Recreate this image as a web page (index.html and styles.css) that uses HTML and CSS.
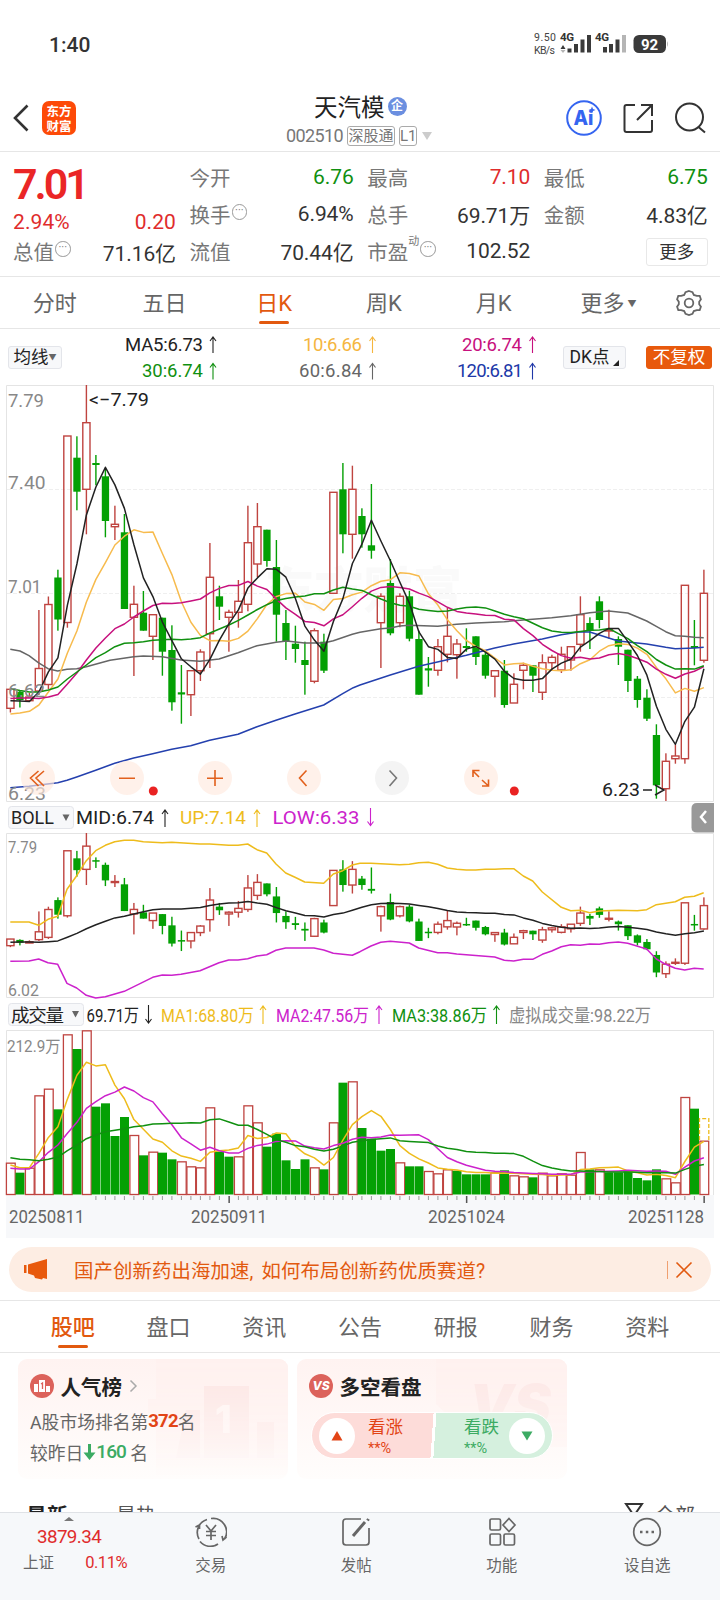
FILE: index.html
```html
<!DOCTYPE html>
<html lang="zh-CN">
<head>
    <meta charset="UTF-8">
    <meta name="viewport" content="width=device-width, initial-scale=1.0">
    <title>天汽模 002510</title>
    <link rel="stylesheet" href="styles.css">
</head>
<body>
<div class="phone">
    <div class="status">
        <span class="clock">1:40</span>
        <svg class="signals" width="140" height="28" viewBox="532 30 140 28">
            <g class="tiny"><text x="534" y="41" textLength="22">9.50</text><text x="534" y="54" textLength="21">KB/s</text></g>
            <g class="net"><text x="560" y="41" textLength="14">4G</text><text x="595" y="41" textLength="14">4G</text></g>
            <g fill="#3a3a3a">
                <path d="M560.500 49l2.500-4 2.500 4zM567.500 48.500h4v4h-4zM574 44h4v8.500h-4zM580.500 39.500h4v13h-4zM587 35h4v17.500h-4zM603 47h4v5.500h-4zM609 44h4v8.500h-4zM615.500 39.500h4v13h-4z"/>
                <rect x="633.500" y="35" width="32.500" height="18" rx="5.500"/>
            </g>
            <path fill="#b5b5b5" d="M560.500 50l2.500 3 2.500-3zM622 35h4v17.500h-4zM667 41q2 3 0 6z"/>
            <text class="batt" x="641" y="49.500" textLength="17">92</text>
        </svg>
    </div>

    <header class="top">
        <svg class="back" width="18" height="28" viewBox="0 0 18 28"><path d="M15.500 1.500L3 14l12.500 12.500"/></svg>
        <div class="logo">东方<br>财富</div>
        <div class="stock">
            <h1>天汽模<i class="qi">企</i></h1>
            <p><span class="code">002510</span><b>深股通</b><b class="l1">L1</b><i class="caret"></i></p>
        </div>
        <svg class="tools" width="144" height="38" viewBox="564 99 144 38">
            <circle cx="584" cy="118" r="16.800" fill="none" stroke="#3565f0" stroke-width="2"/>
            <text class="ai" x="573.500" y="125" textLength="20" lengthAdjust="spacingAndGlyphs">Ai</text>
            <path d="M592 106.500l1 2.500 2.500 1-2.500 1-1 2.500-1-2.500-2.500-1 2.500-1z" fill="#3565f0"/>
            <g class="ico"><path d="M635 105h-8.500q-2 0-2 2v23q0 2 2 2h23.500q2 0 2-2v-10M641 105h11v11M652 105l-15 15"/>
            <circle cx="689.500" cy="117" r="13.500"/><path d="M698.500 127l6.500 5.500"/></g>
        </svg>
    </header>

    <section class="quote">
        <div class="col">
            <strong class="price">7.01</strong>
            <p class="row up chg"><span>2.94%</span><span>0.20</span></p>
            <p class="row"><label>总值<i class="dots">···</i></label><span>71.16亿</span></p>
        </div>
        <div class="col">
            <p class="row"><label>今开</label><span class="down">6.76</span></p>
            <p class="row"><label>换手<i class="dots">···</i></label><span>6.94%</span></p>
            <p class="row"><label>流值</label><span>70.44亿</span></p>
        </div>
        <div class="col">
            <p class="row"><label>最高</label><span class="up">7.10</span></p>
            <p class="row"><label>总手</label><span>69.71万</span></p>
            <p class="row"><label>市盈<sup>动</sup><i class="dots">···</i></label><span>102.52</span></p>
        </div>
        <div class="col">
            <p class="row"><label>最低</label><span class="down">6.75</span></p>
            <p class="row"><label>金额</label><span>4.83亿</span></p>
            <p class="row end"><button class="more">更多</button></p>
        </div>
    </section>

    <nav class="periods">
        <a>分时</a><a>五日</a><a class="on">日K</a><a>周K</a><a>月K</a><a class="drop">更多<small>▼</small></a>
        <svg width="28" height="28" viewBox="0 0 28 28"><path d="M14 2l3.500 1.200 1.300 2.700 3 .9 2.900.1 1.200 3.400-1.700 2.400v2.600l1.700 2.400-1.200 3.400-2.900.1-3 .9-1.300 2.700L14 26l-3.500-1.200-1.300-2.700-3-.9-2.900-.1-1.200-3.400 1.700-2.400v-2.600L2.100 10.300l1.200-3.400 2.900-.1 3-.9 1.300-2.700z"/><circle cx="14" cy="14" r="4.300"/></svg>
    </nav>

    <div class="ma-bar">
        <button class="pick">均线<small>▼</small></button>
        <svg class="legend ma" width="430" height="56" viewBox="115 329 430 56">
            <text x="125" y="350.500" textLength="78" fill="#222">MA5:6.73</text>
            <text x="303" y="350.500" textLength="59" fill="#f5b63f">10:6.66</text>
            <text x="462" y="350.500" textLength="60" fill="#c7117e">20:6.74</text>
            <text x="142" y="377" textLength="61" fill="#109010">30:6.74</text>
            <text x="299" y="377" textLength="63" fill="#666">60:6.84</text>
            <text x="457" y="377" textLength="66" fill="#2038a8">120:6.81</text>
            <g class="arrows">
                <path stroke="#222" d="M213 353v-16m-3 4l3-4 3 4"/>
                <path stroke="#f5b63f" d="M372.500 353v-16m-3 4l3-4 3 4"/>
                <path stroke="#c7117e" d="M532.500 353v-16m-3 4l3-4 3 4"/>
                <path stroke="#109010" d="M213 379.500v-16m-3 4l3-4 3 4"/>
                <path stroke="#666" d="M372.500 379.500v-16m-3 4l3-4 3 4"/>
                <path stroke="#2038a8" d="M532.500 379.500v-16m-3 4l3-4 3 4"/>
            </g>
        </svg>
        <button class="pick dk">DK点<i></i></button>
        <button class="pick fq">不复权</button>
    </div>

    <svg id="kline" width="720" height="418" viewBox="0 385 720 418"></svg>

    <svg class="legend boll" width="720" height="30" viewBox="0 803 720 30">
        <rect class="sel" x="8.500" y="806.500" width="65" height="22" rx="3"/>
        <text x="11" y="824" textLength="43" lengthAdjust="spacingAndGlyphs" fill="#222">BOLL</text><path d="M62.500 814.500h7l-3.500 6.500z" fill="#666"/>
        <text x="76" y="824" textLength="78" lengthAdjust="spacingAndGlyphs" fill="#222">MID:6.74</text>
        <text x="180" y="824" textLength="66" lengthAdjust="spacingAndGlyphs" fill="#eebc1c">UP:7.14</text>
        <text x="272.500" y="824" textLength="87" lengthAdjust="spacingAndGlyphs" fill="#cc22cc">LOW:6.33</text>
        <g class="arrows">
            <path stroke="#222" d="M165 827v-17m-3 4l3-4 3 4"/>
            <path stroke="#eebc1c" d="M257 827v-17m-3 4l3-4 3 4"/>
            <path stroke="#cc22cc" d="M370.500 808v17.500m-3-4l3 4 3-4"/>
        </g>
        <path d="M714 803h-17q-5.500 0-5.500 5.500v19q0 5 5.500 5h17z" fill="#999"/>
        <path d="M706 811l-5 6 5 6" fill="none" stroke="#fff" stroke-width="2.500"/>
    </svg>
    <svg id="boll" width="720" height="166" viewBox="0 833 720 166"></svg>

    <svg class="legend vol" width="720" height="31" viewBox="0 999 720 31">
        <rect class="sel" x="8.500" y="1003.500" width="75" height="22" rx="3"/>
        <text x="11" y="1021.500" textLength="53" fill="#222">成交量</text><path d="M72 1011h7l-3.500 6.500z" fill="#666"/>
        <text x="86.500" y="1021.500" textLength="52.500" lengthAdjust="spacingAndGlyphs" fill="#222">69.71万</text>
        <text x="161" y="1021.500" textLength="93" lengthAdjust="spacingAndGlyphs" fill="#eebc1c">MA1:68.80万</text>
        <text x="276" y="1021.500" textLength="93" lengthAdjust="spacingAndGlyphs" fill="#cc22cc">MA2:47.56万</text>
        <text x="392" y="1021.500" textLength="95" lengthAdjust="spacingAndGlyphs" fill="#109010">MA3:38.86万</text>
        <text x="509" y="1021.500" textLength="142" lengthAdjust="spacingAndGlyphs" fill="#888">虚拟成交量:98.22万</text>
        <g class="arrows">
            <path stroke="#222" d="M148.500 1005v18m-3-4l3 4 3-4"/>
            <path stroke="#eebc1c" d="M263 1024v-18m-3 4l3-4 3 4"/>
            <path stroke="#cc22cc" d="M379 1024v-18m-3 4l3-4 3 4"/>
            <path stroke="#109010" d="M496.500 1024v-18m-3 4l3-4 3 4"/>
        </g>
    </svg>
    <svg id="volume" width="720" height="208" viewBox="0 1030 720 208"></svg>

    <div class="banner">
        <svg width="24" height="22" viewBox="0 0 24 22"><path d="M0 6h2.500v8H0zM4 5.500L23 0v20l-4-1-1 1.500-7-1.500-1-2.500L4 14.500z"/></svg>
        <span>国产创新药出海加速, 如何布局创新药优质赛道?</span>
        <i></i>
        <svg class="x" width="18" height="18" viewBox="0 0 18 18"><path d="M1.500 1.500l15 15M16.500 1.500l-15 15"/></svg>
    </div>

    <nav class="sections">
        <a class="on">股吧</a><a>盘口</a><a>资讯</a><a>公告</a><a>研报</a><a>财务</a><a>资料</a>
    </nav>

    <div class="cards">
        <div class="card">
            <svg class="ghost" width="160" height="120" viewBox="0 0 160 120"><path d="M28 0h132v120H28V54H20V40h8z" fill="#fff1ef"/><path d="M76 27h45v72H76zM58 51h14v48H48zM129 63h17v36h-17z" fill="#fce5e3"/><text x="87" y="74">1</text></svg>
            <h3><svg width="24" height="24" viewBox="0 0 24 24"><circle cx="12" cy="12" r="12" fill="#dc625b"/><path fill="#fff" d="M4 10h4v8H4zM9 6h6v12H9zM16 12h4v6h-4z"/><path d="M11 10l1.500-1v6" fill="none" stroke="#dc625b" stroke-width="1.300"/></svg>人气榜<svg width="9" height="14" viewBox="0 0 9 14"><path d="M1.500 1.500L7 7l-5.500 5.500" fill="none" stroke="#aaa" stroke-width="1.500"/></svg></h3>
            <p>A股市场排名第<b>372</b>名</p>
            <p class="cmp">较昨日<svg width="13" height="18" viewBox="0 0 13 18"><path d="M5 1h3v8.500h4.500l-6 7.500-6-7.500H5z"/></svg><em>160</em> 名</p>
        </div>
        <div class="card">
            <svg class="ghost" width="160" height="120" viewBox="0 0 160 120"><path d="M29 0h131v88H66L45 60 29 45z" fill="#fff1ef"/><text class="vs" x="62" y="66">VS</text></svg>
            <h3><i class="vs-ico">VS</i>多空看盘</h3>
            <div class="vote">
                <div class="bull"><i><svg width="12" height="10" viewBox="0 0 12 10"><path d="M6 0l5.500 9.500H.5z" fill="#e24416"/></svg></i><span>看涨<small>**%</small></span></div>
                <div class="bear"><span>看跌<small>**%</small></span><i><svg width="12" height="10" viewBox="0 0 12 10"><path d="M6 9.500L.5.500h11z" fill="#3cab63"/></svg></i></div>
            </div>
        </div>
    </div>

    <div class="feed">
        <b>最新</b><span>最热</span>
        <svg width="20" height="20" viewBox="0 0 20 20"><path d="M2 2h16l-5.500 8v8h-5v-8z"/></svg><span>全部</span>
    </div>

    <footer>
        <div class="index"><i></i><strong>3879.34</strong><p><span>上证</span><em>0.11%</em></p></div>
        <a><svg width="32" height="30" viewBox="0 0 32 30"><path d="M4 22A13.500 13.500 0 0 1 12 2.500M16 1.500a13.500 13.500 0 0 1 13.500 20.500M5 24.500A13.500 13.500 0 0 0 23 27M.5 10l4-2v4M31.500 20l-3.500 3-1-4M11 8l5 6 5-6M16 14v9M11 14.500h10M11 18.500h10"/></svg>交易</a>
        <a><svg width="32" height="30" viewBox="0 0 32 30"><path d="M21 2H6Q3 2 3 5v20q0 3 3 3h20q3 0 3-3V11"/><path d="M13 19l12-14" stroke-width="3"/><path d="M27.500 3.500l1-1.500" stroke-width="3"/></svg>发帖</a>
        <a><svg width="32" height="30" viewBox="0 0 32 30"><rect x="4" y="2" width="10.500" height="11" rx="1.500"/><path d="M23 1.500l6 6.500-6 6.500L17 8z"/><rect x="4" y="17" width="10.500" height="11" rx="1.500"/><rect x="18" y="17" width="10.500" height="11" rx="1.500"/></svg>功能</a>
        <a><svg width="32" height="30" viewBox="0 0 32 30"><circle cx="16" cy="15" r="13.300"/><path d="M9 15h2.500M14.800 15h2.500M20.500 15H23" stroke-width="2.500"/></svg>设自选</a>
    </footer>
</div>
<script src="chart.js"></script>
</body>
</html>
```
FILE: chart.js
```js
// color, high, low, body top, body bottom
const candles = `r 689 712.5 689.3 708.3
g 690 707.5 691.7 700
r 693 701 697 700.7
r 610 695 668.5 691
r 596.5 689 604.5 684.5
g 569.7 630.7 577.5 619.5
r 436 627.7 436 622.5
g 436.3 510.3 457.7 491.7
r 385 534.3 422.7 489.3
g 455 485.3 463 465
g 470 537.3 476.3 521
r 505.7 540 524.3 526.7
g 514 609 532.3 609
r 585.7 676 604.3 617.3
g 591 630.7 612.7 630.7
r 614.7 660 614.7 636.3
g 617.7 675.7 617.7 651.7
g 625.3 710.7 650 702.3
g 665 723.7 692.3 694.5
r 670.7 716 670.7 694.7
r 649.3 681 652 670.7
r 543 668 577.3 633.7
g 585.7 620 596.3 606.7
r 609.7 651.7 612.3 617.3
r 580 627.7 601.3 612.3
r 505.7 611.3 542.7 604.3
r 503 577 526.7 564
g 529.7 566.7 529.7 561
g 540 641.7 567 614.7
g 610 660 623 641
g 625.7 662.7 643.7 649
g 641.7 694.7 660 665
r 628.3 683.3 630.7 681.3
g 633.7 673 641.7 670.7
r 492.3 593.3 492.3 593.3
g 463 553.3 489.3 534.3
r 465.7 558.7 489.3 534.3
g 508.3 547.7 516 534.3
g 484 558.7 545.3 550.7
r 593.3 668 596.3 622.7
g 559 635.3 583 633.3
r 593.3 627.3 596.3 622.7
g 590.7 641.3 596.3 638.7
g 630.7 694.7 639 694.7
g 657 686.7 668.3 670.5
r 639 675.7 646.7 670.3
r 608 662.3 636.3 654.3
r 639 678.7 644 654.7
g 628.3 651.7 646 648
g 636.3 665 636.3 657
g 651.7 678.7 654.7 675.7
r 670.7 697.3 670.7 676.3
g 660 707.7 670.7 705
r 673.3 703 684.3 703
r 662.7 689.3 665.3 670.3
g 665.3 692 665.3 675.7
r 654.3 700 662.7 692.3
r 654.7 670.7 657.3 662.7
r 646.7 673 654.3 670
r 646.7 670.7 646.7 660
r 596.3 651.7 614.7 644.3
g 617.3 649 623 630.7
g 596.3 628.3 601.3 620
r 609.7 638.7 629.7 631
g 636.3 665 639 646.7
g 649.7 692 649.7 681
g 676 707.7 678.7 700
g 689.3 721 697.7 718.7
g 724.3 798.7 735 785.3
r 753.3 801 761.3 788.7
r 744.7 763.7 756 758.7
r 585.3 763.7 585.3 758.7
g 620 665.3 646 648
r 569.7 662.7 593.3 660.3`.split("\n").map(l => {
    const [c, ...v] = l.split(" ");
    return [c, ...v.map(Number)];
});

const vols = "r488 g518 r503 r286 r266 g328 r103 g147 r91 g320 g310 g408 g351 r405 g466 r455 g458 g478 r484 r499 r502 r322 g455 g470 r469 r316 r367 g440 g401 g481 g507 g478 r502 g508 r367 g248 r244 g384 g416 g452 g447 r487 g499 g499 r513 r520 r508 g512 g523 g523 g523 r517 g511 r526 r529 g532 r518 r526 r520 r524 r456 g508 r508 g517 g517 g514 g534 g541 g508 r535 r547 r291 g326 r422"
    .split(" ").map(v => [v[0], 1000 + v.slice(1) / 3]);

const RED = "#bf4440", GREEN = "#04a004";
const cx = i => 10.4 + 9.5 * i;
const rect = (x, y, w, h, a) => `<rect x="${x}" y="${y}" width="${w}" height="${h}" ${a}/>`;
const line = (pts, color) => `<polyline points="${pts}" fill="none" stroke="${color}" stroke-width="1.5" stroke-linejoin="round"/>`;
const text = (x, y, s, w, a = "") => `<text x="${x}" y="${y}" textLength="${w}" lengthAdjust="spacingAndGlyphs" ${a}>${s}</text>`;

// moving average, the first values come from days left of the window
function average(values, n, seed) {
    return values.map((v, i) => {
        const y = i < seed.length ? seed[i] : values.slice(i - n + 1, i + 1).reduce((a, b) => a + b) / n;
        return cx(i).toFixed(1) + "," + y.toFixed(1);
    }).join(" ");
}

// points kept in thirds of a pixel, left half and right half
function thirds(left, right, oy) {
    const conv = (s, ox) => s.split(" ").map(p => {
        const [x, y] = p.split(",");
        return (ox + x / 3).toFixed(1) + "," + (oy + y / 3).toFixed(1);
    }).join(" ");
    return conv(left, 0) + " " + conv(right, 360);
}

function drawCandles(fy) {
    return candles.map(([c, hi, lo, top, bot], i) => {
        const x = cx(i), [h, l, t, b] = [hi, lo, top, bot].map(fy);
        if (c === "g") {
            return rect(x - .7, h, 1.4, l - h, `fill="${GREEN}"`) + rect(x - 3.6, t, 7.3, Math.max(b - t, 1.5), `fill="${GREEN}"`);
        }
        return rect(x - .7, h, 1.4, Math.max(t - h, 0), `fill="${RED}"`) + rect(x - .7, b, 1.4, Math.max(l - b, 0), `fill="${RED}"`)
            + rect(x - 3.6, t, 7.2, Math.max(b - t, 1), `fill="none" stroke="${RED}" stroke-width="1.4"`);
    }).join("");
}

const closes = candles.map(c => c[0] === "r" ? c[3] : c[4]);
const seed20 = [698.5, 698, 698, 698.5, 697, 694.5, 684, 673, 660, 648, 638, 628.7, 624, 617, 611, 605.5, 603.3, 603.5, 602.7];

// ---- day K ----
let k = text(265, 608, "东方财富", 197, 'class="mark"');
k += '<path d="M6.500 385.500H713.500V801.500H6.500z" fill="none" stroke="#e4e4e4"/>';
k += '<path d="M7 489.500H713M7 593.500H713M7 697.500H713" stroke="#efefef" stroke-dasharray="4 2"/>';
k += drawCandles(y => y);
k += line(thirds("31,148 60,153 87,167 115,188 144,206 173,213 201,208 230,206 259,200 330,181 401,170 430,168 487,170 543,180 600,184 657,177 714,158 771,137 828,127 860,123 914,129 971,129 1000,122 1057,103",
    "0,97 62,86 91,84 119,78 148,76 233,79 290,73 347,69 433,65 490,60 575,53 632,47 689,38 746,33 803,39 832,51 860,63 889,79 917,95 946,107 974,109 1003,112 1031,113", 600), "#666");
k += line(thirds("31,563 87,559 173,548 201,541 230,531 287,511 344,490 401,474 458,461 515,448 572,437 629,421 714,403 771,380 828,361 885,342 971,315 1028,281 1060,263",
    "0,255 91,225 176,199 262,179 319,166 404,144 461,132 547,117 604,104 661,95 689,96 718,105 746,114 775,123 860,132 917,142 946,146 1003,144 1031,142", 600), "#2440ae");
k += line(average(closes, 10, [714, 713, 711.3, 705, 692, 679, 653, 631, 602]), "#f7bb4d");
k += line(average(closes, 20, seed20), "#c7117e");
k += line(average(closes, 30, [688.7, 690.5, 692, 692, 690, 687, 679, 672, 665, 657.7, 652.7, 646.7, 643.3, 642.7, 641.7, 640.3, 639.7, 639.3, 639.7, 639, 637.7, 633, 629, 625, 620.3, 615, 609.5, 604.7, 600.5]), "#109010");
k += line(average(closes, 5, [700.7, 701, 701.5, 692]), "#222");
k += text(8, 406.5, "7.79", 36) + text(8, 489, "7.40", 37.5) + text(8, 593, "7.01", 33.5) + text(8, 697, "6.62", 37) + text(8, 799.500, "6.23", 38);
k += text(89, 405.5, "&lt;−7.79", 60, 'class="dark"') + text(602, 796, "6.23", 38, 'class="dark"') + '<path d="M643 790h9M655 785l9 5-9 5" fill="none" stroke="#222" stroke-width="1.500"/>';
[38, 127, 215, 304, 392, 481].forEach((x, i) => {
    k += `<circle cx="${x}" cy="778" r="17" fill="${i === 4 ? "#eee" : "#ffe9de"}" fill-opacity=".65"/>`;
});
k += `<g fill="none" stroke="#e2601c" stroke-width="1.600"><path d="M38.500 771l-8 7 8 8M44 771l-8 7 8 8M119 778.300h16M207 778.300h16M215 770v16M306.500 770.500l-7 7.500 7 8"/>
    <path d="M479 777l-6-6M473 777v-6.500h6.500M482 780l6.500 6M488.500 779.500v6.500H482"/><path stroke="#777" d="M389.500 770.500l7 7.500-7 8"/></g>`;
k += '<circle cx="153.300" cy="791" r="4.500" fill="#e92222"/><circle cx="514.300" cy="791" r="4.500" fill="#e92222"/>';
document.getElementById("kline").innerHTML = k;

// ---- boll ----
const by = y => 833 + (y - 385) * .3485;
let b = '<path d="M6.500 833.500H713.500V997.500H6.500z" fill="none" stroke="#e4e4e4"/>' + drawCandles(by);
b += line(thirds("31,366 87,366 116,376 144,358 173,349 201,268 230,227 259,182 287,152 316,136 344,125 373,121 401,121 430,125 487,128 515,127 600,132 629,132 686,136 714,136 743,132 771,149 800,159 828,192 857,219 885,232 914,246 971,250 1000,222 1028,212 1057,195",
    "0,190 33,190 119,194 148,193 176,188 205,187 233,193 262,204 290,208 319,210 347,210 376,208 404,208 433,206 461,206 490,228 518,243 547,276 604,322 632,332 661,331 689,338 718,333 775,331 832,332 860,329 889,314 946,305 974,292 1003,289 1031,278", 800), "#eebc1c");
b += line(thirds("31,484 87,483 116,477 144,488 173,493 201,550 230,564 259,586 287,594 316,590 373,574 458,532 487,525 515,526 543,523 600,512 657,488 686,480 714,480 743,476 771,468 800,464 828,451 857,444 942,444 971,450 1000,460 1057,466",
    "0,455 33,438 62,427 91,424 148,429 176,444 233,458 262,458 290,462 404,471 433,481 461,483 490,478 518,478 547,463 575,453 604,440 632,434 661,436 689,432 718,433 746,428 775,426 803,430 860,447 889,477 917,493 946,505 974,510 1003,505 1031,507", 800), "#cc22cc");
b += line(average(closes.map(by), 20, seed20.map(by)), "#222");
b += text(8, 852.500, "7.79", 29, 'class="sm"') + text(8, 996, "6.02", 31, 'class="sm"');
document.getElementById("boll").innerHTML = b;

// ---- volume ----
let v = rect(6, 1195, 708, 43, 'fill="#f7f8fa"') + '<path d="M6.500 1195V1030.500H713.500V1195" fill="none" stroke="#e4e4e4"/>';
v += text(7, 1052, "212.9万", 53.5, 'class="sm"');
vols.forEach(([c, y], i) => {
    const x = cx(i);
    v += c === "g" ? rect(x - 4.4, y, 9, 1194.5 - y, `fill="${GREEN}"`)
        : rect(x - 4, y + .5, 8.8, 1194 - y, `fill="#fff" stroke="${RED}" stroke-width="1.3"`);
});
v += '<path d="M699.500 1140v-21.300h9.300V1140" fill="none" stroke="#eebc1c" stroke-width="1.300" stroke-dasharray="4 2"/>';
const vy = vols.map(d => d[1]), off = a => a.map(n => 1000 + n / 3);
v += line(average(vy, 5, off([495, 503, 503, 460])), "#eebc1c");
v += line(average(vy, 10, off([505, 507, 507, 485, 457, 435, 400, 367, 325])), "#cc22cc");
v += line(average(vy, 20, off([473, 478, 479, 482, 478, 471, 452, 435, 416, 405, 395, 391, 386, 380, 377, 372, 371, 370, 370])), "#109010");
for (let i = 9; i < 74; i++) {
    const big = i === 23 || i === 48 || i === 73;
    v += rect(cx(i) - .5, 1196, big ? 1.5 : 1, big ? 7 : 4, `fill="${big ? "#555" : "#999"}"`);
}
v += text(9, 1222.500, "20250811", 75.5, 'class="date"') + text(191, 1222.500, "20250911", 76, 'class="date"')
    + text(428, 1222.500, "20251024", 77, 'class="date"') + text(628, 1222.500, "20251128", 76, 'class="date"');
document.getElementById("volume").innerHTML = v;
```
FILE: styles.css
```css
*,
*:before,
*:after {
    box-sizing: border-box;
}
body,
h1,
h3,
p {
    margin: 0;
}
body {
    background: #fff;
    color: #333;
    font-family: Roboto, "Noto Sans CJK SC", sans-serif;
    font-size: 20px;
}
i,
em {
    font-style: normal;
}
svg {
    display: block;
    flex: none;
}
button {
    font: inherit;
    padding: 0;
    cursor: pointer;
}
.phone {
    width: 720px;
    height: 1600px;
    overflow: hidden;
    display: flex;
    flex-direction: column;
}

/* status */
.status {
    height: 88px;
    padding: 0 48px 0 49px;
    display: flex;
    align-items: center;
    justify-content: space-between;
}
.clock {
    font-size: 21px;
    font-weight: 500;
    padding-top: 2px;
}
.tiny {
    font-size: 10.5px;
    fill: #444;
}
.net {
    font-size: 11.5px;
    font-weight: 700;
    fill: #333;
}
.batt {
    font-size: 15px;
    font-weight: 700;
    fill: #fff;
}

/* header */
.top {
    height: 64px;
    border-bottom: 1px solid #e6e6e6;
    padding: 0 12px;
    display: flex;
    align-items: center;
    flex: none;
}
.back,
.tools {
    margin-top: -3px;
}
.back path {
    fill: none;
    stroke: #333;
    stroke-width: 2.6;
}
.logo {
    width: 34px;
    height: 34px;
    margin: -3px 0 0 12px;
    border-radius: 7px;
    background: #fd4a08;
    color: #fff;
    font: 700 12.500px/14.500px "Noto Sans CJK SC", sans-serif;
    text-align: center;
    padding-top: 3px;
}
.stock {
    flex: 1;
    height: 64px;
    padding: 6px 0 0 210px;
}
.stock h1 {
    display: flex;
    align-items: center;
    gap: 3px;
    font-size: 23.5px;
    font-weight: 400;
    line-height: 28px;
    color: #222;
    padding-left: 28px;
}
.qi {
    width: 19px;
    height: 19px;
    border-radius: 50%;
    background: #6b8fe0;
    color: #fff;
    font-size: 12px;
    font-weight: 700;
    line-height: 18px;
    text-align: center;
    margin-top: -2px;
}
.stock p {
    display: flex;
    align-items: center;
    gap: 4px;
    color: #777;
    font-size: 18px;
    height: 28px;
}
.code {
    letter-spacing: -.6px;
    width: 57px;
}
.stock b {
    font-weight: 400;
    font-size: 15px;
    line-height: 18px;
    height: 20px;
    width: 48px;
    text-align: center;
    border: 1px solid #aaa;
    border-radius: 3px;
}
.stock .l1 {
    width: 18px;
}
.caret {
    border: 5.5px solid transparent;
    border-top: 8px solid #ccc;
    border-bottom: 0;
    margin-left: 1px;
}
.ai {
    font: 800 20px Inter, sans-serif;
    fill: #3565f0;
}
.ico {
    fill: none;
    stroke: #333;
    stroke-width: 2;
}

/* quote */
.quote {
    height: 125px;
    border-bottom: 1px solid #e6e6e6;
    padding: 7px 12px 0 13px;
    display: grid;
    grid-template-columns: 163px 164px 163px 164px;
    column-gap: 13.600px;
    flex: none;
}
.row {
    height: 37px;
    display: flex;
    align-items: center;
    justify-content: space-between;
    font-size: 20.5px;
    white-space: nowrap;
}
.row span {
    font-size: 21px;
    letter-spacing: -.1px;
}
.row label {
    color: #777;
    display: flex;
    align-items: center;
}
.col .row label,
.col:not(:first-child) .row span {
    margin-top: -1px;
}
.row.end {
    justify-content: flex-end;
}
.up,
.row .up {
    color: #e02c2c;
}
.row .down {
    color: #109010;
}
.price {
    display: block;
    height: 46px;
    font-size: 43px;
    font-weight: 600;
    line-height: 50px;
    letter-spacing: -3px;
    color: #ea2626;
}
.chg {
    height: 34px;
    margin-bottom: -6px;
}
.chg span {
    letter-spacing: .1px;
}
.dots {
    width: 15.5px;
    height: 15.5px;
    border: 1px solid #999;
    border-radius: 50%;
    font-size: 11px;
    line-height: 12px;
    text-align: center;
    margin: -4px 0 0 1px;
}
.row sup {
    font-size: 11px;
    line-height: 12px;
    margin-top: -18px;
}
.more {
    width: 62px;
    height: 28px;
    border: 1px solid #e8e8e8;
    border-radius: 3px;
    background: #fff;
    font-size: 17.5px;
    line-height: 24px;
    color: #333;
}

/* period tabs */
.periods {
    height: 52px;
    border-bottom: 1px solid #e6e6e6;
    display: flex;
    align-items: center;
    flex: none;
}
.periods a {
    width: 109.700px;
    height: 51px;
    line-height: 54px;
    font-size: 22px;
    color: #666;
    text-align: center;
}
.periods .drop {
    width: 120px;
}
.periods .drop small {
    font-size: 9px;
    vertical-align: 4px;
    margin-left: 3px;
}
.periods svg {
    margin-left: 7px;
}
.periods path,
.periods circle {
    fill: none;
    stroke: #666;
    stroke-width: 1.8;
}
.periods .on,
.sections .on {
    color: #e2590f;
    position: relative;
}
.periods .on:after,
.sections .on:after {
    content: "";
    position: absolute;
    left: 50%;
    bottom: 4px;
    width: 30px;
    height: 3px;
    margin-left: -15px;
    border-radius: 2px;
    background: #e2590f;
}

/* MA bar */
.ma-bar {
    height: 56px;
    padding-left: 8px;
    display: flex;
    align-items: center;
    flex: none;
}
.pick {
    width: 54px;
    height: 23px;
    background: #f7f8fa;
    border: 1px solid #e3e5ea;
    border-radius: 3px;
    font-size: 17.5px;
    line-height: 20px;
    color: #222;
    white-space: nowrap;
}
.pick small {
    font-size: 8px;
    vertical-align: 3px;
    color: #666;
}
.ma {
    margin-left: 53px;
}
.dk {
    width: 63px;
    margin-left: 18px;
}
.dk i {
    display: inline-block;
    border: 3px solid #222;
    border-top-color: transparent;
    border-left-color: transparent;
    margin: 0 0 -3px 4px;
}
.fq {
    width: 66px;
    margin-left: 20px;
    background: #e8590c;
    border-color: #e8590c;
    color: #fff;
}
.legend {
    font-size: 18.5px;
}
.legend text {
    white-space: pre;
}
.boll {
    font-size: 18.5px;
}
.vol {
    font-size: 18.5px;
}
.sel {
    fill: #f7f8fa;
    stroke: #e3e5ea;
}
.arrows {
    fill: none;
    stroke-width: 1.1;
}

/* charts */
#kline text {
    font-size: 18.5px;
    fill: #888;
}
#kline .dark {
    fill: #222;
}
#kline .mark {
    font-size: 49px;
    font-weight: 900;
    fill: #fafafa;
}
#boll .sm,
#volume .sm {
    font-size: 16px;
    fill: #888;
}
#volume .date {
    font-size: 18px;
    fill: #666;
}

/* banner */
.banner {
    width: 702px;
    height: 45px;
    margin: 9px 0 8px 9px;
    padding: 0 18px 0 15px;
    border-radius: 23px;
    background: #fdede3;
    color: #e2590f;
    display: flex;
    align-items: center;
    flex: none;
}
.banner span {
    flex: 1;
    margin-left: 26px;
    font-size: 19.4px;
    letter-spacing: .12px;
    word-spacing: 3px;
}
.banner svg {
    fill: #e8590c;
}
.banner i {
    width: 1px;
    height: 18px;
    background: #f0a070;
    margin-right: 7px;
}
.banner .x {
    stroke: #e2590f;
    stroke-width: 1.6;
}

/* section tabs */
.sections {
    height: 53px;
    padding: 0 25px;
    border-top: 1px solid #e6e6e6;
    border-bottom: 1px solid #e6e6e6;
    display: flex;
    flex: none;
}
.sections a {
    flex: 1;
    font-size: 22px;
    line-height: 54px;
    color: #666;
    text-align: center;
}
.sections .on {
    font-weight: 500;
}

/* cards */
.cards {
    display: flex;
    gap: 9px;
    padding: 6px 0 0 18px;
    flex: none;
}
.card {
    width: 270px;
    height: 120px;
    border-radius: 9px;
    padding: 12px;
    background: linear-gradient(#fff3f1, #fffdfc);
    position: relative;
    overflow: hidden;
}
.ghost {
    position: absolute;
    right: 0;
    top: 0;
    -webkit-mask-image: linear-gradient(#000, transparent);
    mask-image: linear-gradient(#000, transparent);
}
.ghost text {
    font: 800 38px Inter, sans-serif;
    fill: #fff5f3;
}
.ghost .vs {
    font: italic 900 56px Inter, sans-serif;
    fill: #fce6e4;
}
.card h3 {
    position: relative;
    display: flex;
    align-items: center;
    gap: 6.5px;
    height: 30px;
    font-size: 20.5px;
    font-weight: 700;
    color: #222;
}
.card p {
    position: relative;
    display: flex;
    align-items: center;
    height: 31px;
    margin-top: 4px;
    font-size: 17.8px;
    color: #666;
    white-space: pre;
}
.card .cmp {
    margin-top: 0;
}
.card p b {
    color: #e24416;
    font-weight: 700;
    font-size: 18.5px;
    letter-spacing: -.8px;
}
.card p em {
    color: #3cab63;
    font-weight: 500;
    font-size: 19px;
    letter-spacing: -1px;
}
.cmp path {
    fill: #3cab63;
}
.vs-ico {
    width: 24px;
    height: 24px;
    border-radius: 50%;
    background: #dc625b;
    color: #fff;
    font: italic 800 12px/24px Inter, sans-serif;
    text-align: center;
}
.vote {
    position: relative;
    display: flex;
    width: 242px;
    height: 47px;
    margin: 11px 0 0 2px;
    border-radius: 24px;
    overflow: hidden;
    background: linear-gradient(94deg, #fddcd9 0 50%, #fff 50% 51.200%, #d5f0de 51.200%);
    border: 1px solid #fff;
}
.vote div {
    flex: 1;
    display: flex;
    align-items: center;
    gap: 13px;
    padding: 0 7px;
}
.vote i {
    width: 36px;
    height: 36px;
    border-radius: 50%;
    background: #fff;
    display: flex;
    align-items: center;
    justify-content: center;
}
.vote span {
    font-size: 17.5px;
    line-height: 26px;
}
.vote small {
    display: block;
    font-size: 14.5px;
    line-height: 17px;
}
.bull {
    color: #e24416;
}
.vote .bear {
    color: #3cab63;
    justify-content: flex-end;
    gap: 10px;
}

/* feed tabs, run under the bottom bar */
.feed {
    height: 33px;
    padding: 21px 25px 0 26px;
    display: flex;
    font-size: 20px;
    line-height: 32px;
    color: #555;
    overflow: hidden;
    flex: none;
}
.feed b {
    width: 90px;
    color: #222;
    font-size: 21px;
}
.feed svg {
    margin: 2px 11px 0 auto;
    fill: none;
    stroke: #333;
    stroke-width: 2;
}

/* bottom bar */
footer {
    flex: 1;
    display: flex;
    background: #f6f8fa;
    border-top: 1px solid #dfe2e6;
}
footer a {
    width: 145.5px;
    padding-top: 4px;
    display: flex;
    flex-direction: column;
    align-items: center;
    gap: 6px;
    font-size: 15.5px;
    color: #666;
}
footer a svg {
    fill: none;
    stroke: #666;
    stroke-width: 1.7;
}
.index {
    width: 138px;
    padding-top: 4px;
    color: #e02c2c;
}
.index i {
    display: block;
    width: 10px;
    margin-left: 64px;
    border: 5px solid transparent;
    border-bottom: 4px solid #777;
    border-top: 0;
}
.index strong {
    display: block;
    margin: 4px 0 3px 37px;
    font-size: 18.8px;
    font-weight: 400;
    letter-spacing: -.6px;
    line-height: 24px;
}
.index p {
    display: flex;
    justify-content: space-between;
    padding: 0 11px 0 23px;
    font-size: 15.5px;
    line-height: 22px;
}
.index span {
    color: #666;
}
.index em {
    font-size: 16.5px;
    letter-spacing: -.5px;
}
```
